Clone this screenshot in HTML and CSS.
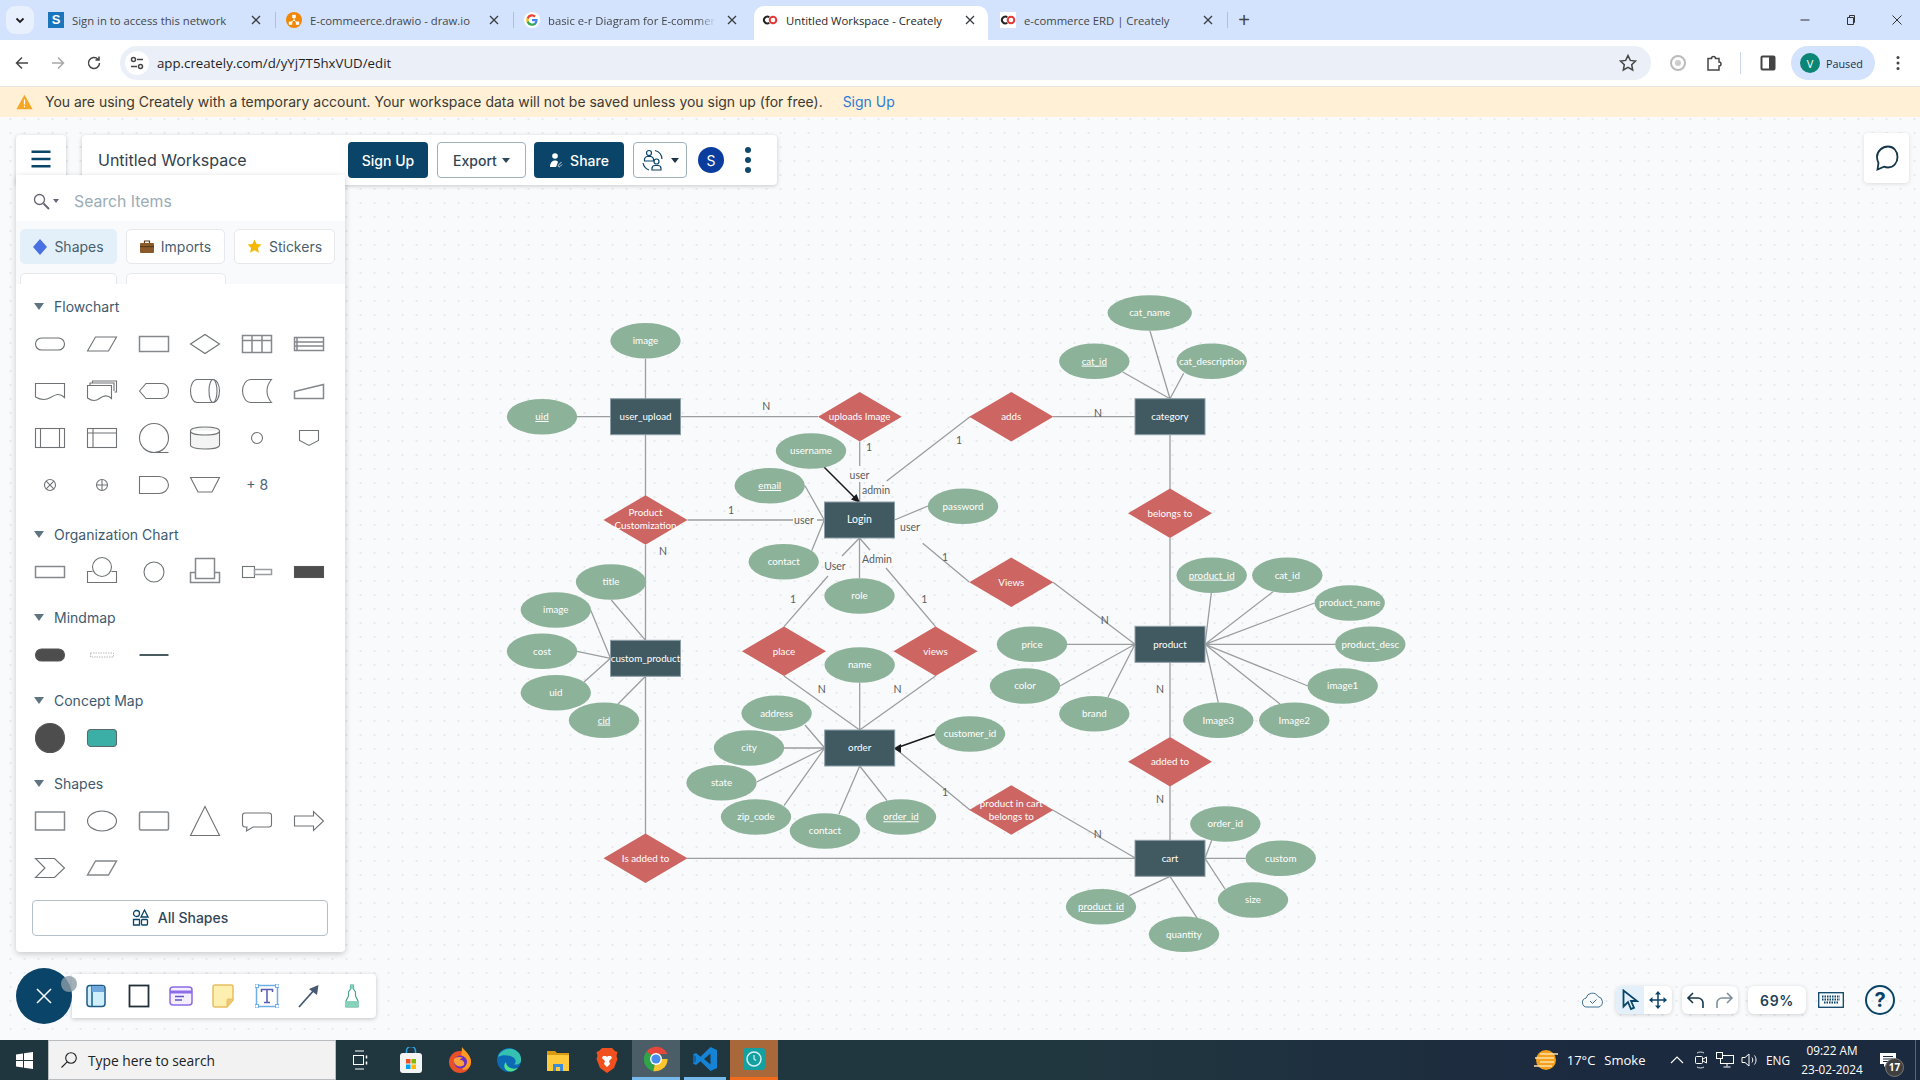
FILE: index.html
```html
<!DOCTYPE html>
<html lang="en">
<head>
<meta charset="utf-8">
<title>Untitled Workspace - Creately</title>
<link rel="stylesheet" href="styles.css">
</head>
<body>
<div class="app">

<header class="tabstrip">
  <button class="tabmenu"><svg width="12" height="12" viewBox="0 0 12 12"><path class="ch" d="M2.5 4.5 6 8l3.5-3.5"/></svg></button>
  <div class="tab">
    <span class="fav fav-s">S</span><span class="tabtitle">Sign in to access this network</span><svg class="tabx" viewBox="0 0 16 16"><path d="m4 4 8 8m0-8-8 8"/></svg>
  </div><i class="sep"></i>
  <div class="tab">
    <svg class="fav" viewBox="0 0 16 16"><circle cx="8" cy="8" r="8" fill="#F08705"/><path d="M8 5v3M8 8 4.5 11M8 8l3.5 3" stroke="#fff" stroke-width="1"/><rect x="6.2" y="2.8" width="3.6" height="3.2" fill="#fff"/><rect x="2.8" y="9.6" width="3.4" height="3.2" fill="#fff"/><rect x="9.8" y="9.6" width="3.4" height="3.2" fill="#fff"/></svg>
    <span class="tabtitle">E-commeerce.drawio - draw.io</span><svg class="tabx" viewBox="0 0 16 16"><path d="m4 4 8 8m0-8-8 8"/></svg>
  </div><i class="sep"></i>
  <div class="tab">
    <svg class="fav" viewBox="0 0 16 16"><circle cx="8" cy="8" r="8" fill="#fff"/><path d="M13.6 8.1c0-.4 0-.8-.1-1.2H8v2.3h3.2a2.8 2.8 0 0 1-1.2 1.8v1.5h1.9c1.1-1 1.7-2.5 1.7-4.4Z" fill="#4285F4"/><path d="M8 13.8c1.6 0 2.9-.5 3.9-1.4L10 10.9c-.5.4-1.2.6-2 .6-1.5 0-2.8-1-3.3-2.4H2.8v1.5A5.8 5.8 0 0 0 8 13.8Z" fill="#34A853"/><path d="M4.7 9.1a3.5 3.5 0 0 1 0-2.2V5.4H2.8a5.800 5.800 0 0 0 0 5.200Z" fill="#FBBC05"/><path d="M8 4.500c.9 0 1.600.3 2.200.9l1.700-1.700A5.800 5.800 0 0 0 2.800 5.400l1.900 1.500C5.200 5.500 6.500 4.500 8 4.500Z" fill="#EA4335"/></svg>
    <span class="tabtitle fade">basic e-r Diagram for E-commerce</span><svg class="tabx" viewBox="0 0 16 16"><path d="m4 4 8 8m0-8-8 8"/></svg>
  </div><i class="sep off"></i>
  <div class="tab active">
    <svg class="fav" viewBox="0 0 16 16"><path d="M7.300 5.200a3.400 3.400 0 1 0 0 5.600" fill="none" stroke="#222" stroke-width="2"/><circle cx="11" cy="8" r="3.300" fill="none" stroke="#E53935" stroke-width="2"/></svg>
    <span class="tabtitle">Untitled Workspace - Creately</span><svg class="tabx" viewBox="0 0 16 16"><path d="m4 4 8 8m0-8-8 8"/></svg>
  </div><i class="sep off"></i>
  <div class="tab">
    <svg class="fav" viewBox="0 0 16 16"><rect width="16" height="16" fill="#fff"/><path d="M7.300 5.200a3.400 3.400 0 1 0 0 5.600" fill="none" stroke="#222" stroke-width="2"/><circle cx="11" cy="8" r="3.300" fill="none" stroke="#E53935" stroke-width="2"/></svg>
    <span class="tabtitle">e-commerce ERD | Creately</span><svg class="tabx" viewBox="0 0 16 16"><path d="m4 4 8 8m0-8-8 8"/></svg>
  </div><i class="sep"></i>
  <button class="newtab">+</button>
  <div class="winctl">
    <span class="wbtn"><svg width="12" height="12" viewBox="0 0 12 12"><path d="M1.500 6h9" stroke="#333" stroke-width="1"/></svg></span>
    <span class="wbtn"><svg width="12" height="12" viewBox="0 0 12 12"><path d="M2.500 3.500h6v7h-6zM4.500 3.500v-2h5v7h-1" fill="none" stroke="#333" stroke-width="1"/></svg></span>
    <span class="wbtn"><svg width="12" height="12" viewBox="0 0 12 12"><path d="m1.500 1.500 9 9m0-9-9 9" stroke="#333" stroke-width="1"/></svg></span>
  </div>
</header>

<nav class="toolbar">
  <span class="nbtn"><svg width="16" height="16" viewBox="0 0 16 16"><path class="tb" d="M14 8H2.500M8 2.500 2.500 8 8 13.500"/></svg></span>
  <span class="nbtn dim"><svg width="16" height="16" viewBox="0 0 16 16"><path class="tb" d="M2 8h11.500M8 2.500 13.500 8 8 13.500"/></svg></span>
  <span class="nbtn"><svg width="16" height="16" viewBox="0 0 16 16"><path class="tb" d="M13.500 8A5.500 5.500 0 1 1 12 4.200M13 1.500V5H9.500"/></svg></span>
  <div class="address">
    <span class="siteicon"><svg width="14" height="14" viewBox="0 0 14 14"><circle cx="3.500" cy="3.500" r="2" class="tb"/><path class="tb" d="M7 3.500h6M1 10.500h6"/><circle cx="10.500" cy="10.500" r="2" class="tb"/></svg></span>
    <span class="url">app.creately.com/d/yYj7T5hxVUD/edit</span>
    <svg class="star" width="20" height="20" viewBox="0 0 20 20"><path class="tb" d="m10 2.500 2.300 4.900 5.200.7-3.800 3.600 1 5.300-4.700-2.600L5.300 17l1-5.300L2.500 8.100l5.200-.7Z"/></svg>
  </div>
  <span class="nbtn"><svg width="18" height="18" viewBox="0 0 18 18"><circle cx="9" cy="9" r="7" fill="none" stroke="#bbb" stroke-width="2"/><circle cx="9" cy="9" r="3" fill="#ccc"/></svg></span>
  <span class="nbtn"><svg width="18" height="18" viewBox="0 0 18 18"><path class="tb" d="M3 4.500h3.500a2 2 0 0 1 4 0H14V8a2 2 0 0 1 0 4v4H3z"/></svg></span>
  <i class="tsep"></i>
  <span class="nbtn"><svg width="18" height="18" viewBox="0 0 18 18"><rect x="2.500" y="2.500" width="13" height="13" rx="1" fill="none" stroke="#444" stroke-width="2"/><rect x="10" y="3" width="5" height="12" fill="#444"/></svg></span>
  <div class="paused"><span class="vdot">V</span><span>Paused</span></div>
  <span class="nbtn"><svg width="4" height="16" viewBox="0 0 4 16"><circle cx="2" cy="2.500" r="1.500" fill="#444"/><circle cx="2" cy="8" r="1.500" fill="#444"/><circle cx="2" cy="13.500" r="1.500" fill="#444"/></svg></span>
</nav>

<div class="banner">
  <svg class="warn" width="17" height="16" viewBox="0 0 17 16"><path d="M8.500.8 16.600 15.200H.4Z" fill="#F5A623"/><path d="M8.500 5.500v5M8.500 11.800v1.500" stroke="#fff" stroke-width="1.300"/></svg>
  <span class="bantext">You are using Creately with a temporary account. Your workspace data will not be saved unless you sign up (for free).</span>
  <a class="banlink">Sign Up</a>
</div>

<main class="canvas">
  <svg class="diagram" width="1920" height="923" viewBox="0 117 1920 923">
    <path class="ln" d="M577 416.700H611M645.500 358.700V399M680.500 416.700H818M645.500 434.700V496M859.700 441.400V466M859.700 482V502M886.700 481 970 416.700M805 485.700 824.300 520M811.700 550.700 824.300 520M928 506 894.500 520M687.500 520H793M817 520H824M922.700 543.300 969.300 582M859.500 538 842 556M828 576 784 626.600M859.500 538 870 550M886 568 935.500 626.600M859.500 538V578M784 676 859.700 730M935.500 676 859.700 730M859.700 683V730M805 725 824.700 748M784 748H824.700M756.700 782 824.700 748M784 805.700 824.700 748M839 814 859.700 766M887 800.700 859.700 766M970 810 894.700 748M1052.700 810 1135.700 858.300M687 858.300H1135.700M645.500 676.300V834M645.500 545V640.300M611.300 600 645.500 640.300M590.600 610 610.500 658.300M577 651.300 610.500 658.300M584 682 610.500 658.300M618 704 645.500 676.300M1150 331 1170 398.700M1122.700 372 1170 398.700M1183.700 373.300 1170 398.700M1053 416.700H1135M1170 434.700V489M1170 538V626M1053 582.300 1135 644.300M1067 644.300H1135M1060 686 1135 644.300M1108 697 1135 644.300M1211.300 593 1205 644.300M1273 591.700 1205 644.300M1314.700 603 1205 644.300M1335 644.300H1205M1308 686 1205 644.300M1280 704 1205 644.300M1218.300 702.700 1205 644.300M1170 662.300V737M1170 786V840.300M1211.700 840.300 1205 858.300M1245.500 858.300H1205M1225 889 1205 858.300M1129.300 895.700 1170 876.300M1197.300 918.300 1170 876.300"/>
    <path class="ar" d="M824 467 855 498M935.800 734 899 747"/>
    <polygon class="arh" points="860,503 851,499.500 856.500,494"/>
    <polygon class="arh" points="893.500,748.500 901,744 901,753"/>
    <g class="ell">
      <ellipse cx="645.500" cy="340.700" rx="35.200" ry="17.800"/>
      <ellipse cx="542" cy="416.700" rx="35.200" ry="17.800"/>
      <ellipse cx="811" cy="451" rx="35.200" ry="17.800"/>
      <ellipse cx="769.700" cy="485.700" rx="35.200" ry="17.800"/>
      <ellipse cx="963" cy="506.300" rx="35.200" ry="17.800"/>
      <ellipse cx="783.700" cy="561.700" rx="35.200" ry="17.800"/>
      <ellipse cx="611" cy="582" rx="35.200" ry="17.800"/>
      <ellipse cx="859.500" cy="596" rx="35.200" ry="17.800"/>
      <ellipse cx="555.800" cy="610" rx="35.200" ry="17.800"/>
      <ellipse cx="542" cy="651.300" rx="35.200" ry="17.800"/>
      <ellipse cx="555.800" cy="692.700" rx="35.200" ry="17.800"/>
      <ellipse cx="604" cy="720.300" rx="35.200" ry="17.800"/>
      <ellipse cx="859.700" cy="665" rx="35.200" ry="17.800"/>
      <ellipse cx="776.600" cy="713.300" rx="35.200" ry="17.800"/>
      <ellipse cx="749" cy="748" rx="35.200" ry="17.800"/>
      <ellipse cx="721.500" cy="782.700" rx="35.200" ry="17.800"/>
      <ellipse cx="756" cy="817" rx="35.200" ry="17.800"/>
      <ellipse cx="824.900" cy="831" rx="35.200" ry="17.800"/>
      <ellipse cx="901" cy="817" rx="35.200" ry="17.800"/>
      <ellipse cx="970" cy="734" rx="35.200" ry="17.800"/>
      <ellipse cx="1149.700" cy="313" rx="42.200" ry="17.800"/>
      <ellipse cx="1094.300" cy="361.300" rx="35.200" ry="17.800"/>
      <ellipse cx="1211.700" cy="361.300" rx="35.200" ry="17.800"/>
      <ellipse cx="1211.700" cy="575.300" rx="35.200" ry="17.800"/>
      <ellipse cx="1287.300" cy="575.300" rx="35.200" ry="17.800"/>
      <ellipse cx="1349.700" cy="603" rx="35.200" ry="17.800"/>
      <ellipse cx="1370.300" cy="644.300" rx="35.200" ry="17.800"/>
      <ellipse cx="1342.700" cy="686" rx="35.200" ry="17.800"/>
      <ellipse cx="1294.300" cy="720.300" rx="35.200" ry="17.800"/>
      <ellipse cx="1218.300" cy="720.300" rx="35.200" ry="17.800"/>
      <ellipse cx="1032" cy="644.300" rx="35.200" ry="17.800"/>
      <ellipse cx="1025" cy="686" rx="35.200" ry="17.800"/>
      <ellipse cx="1094.300" cy="713.700" rx="35.200" ry="17.800"/>
      <ellipse cx="1225.300" cy="824" rx="35.200" ry="17.800"/>
      <ellipse cx="1280.700" cy="858.300" rx="35.200" ry="17.800"/>
      <ellipse cx="1253" cy="900" rx="35.200" ry="17.800"/>
      <ellipse cx="1184" cy="934.300" rx="35.200" ry="17.800"/>
      <ellipse cx="1101" cy="906.700" rx="35.200" ry="17.800"/>
    </g>
    <g class="ent">
      <rect x="610.500" y="398.700" width="70" height="36"/>
      <rect x="824.500" y="502" width="70" height="36"/>
      <rect x="610.500" y="640.300" width="70" height="36"/>
      <rect x="824.700" y="730" width="70" height="36"/>
      <rect x="1135" y="398.700" width="70" height="36"/>
      <rect x="1135" y="626.300" width="70" height="36"/>
      <rect x="1135" y="840.300" width="70" height="36"/>
    </g>
    <g class="rel">
      <polygon points="818,416.700 859.700,392 901.700,416.700 859.700,441.400"/>
      <polygon points="603.500,520 645.500,495.300 687.500,520 645.500,544.700"/>
      <polygon points="969.300,416.700 1011.300,392 1053.300,416.700 1011.300,441.400"/>
      <polygon points="742,651.300 784,626.600 826,651.300 784,676"/>
      <polygon points="893.500,651.300 935.500,626.600 977.500,651.300 935.500,676"/>
      <polygon points="969.300,582.300 1011.300,557.600 1053.300,582.300 1011.300,607"/>
      <polygon points="969.300,810 1011.300,785.300 1053.300,810 1011.300,834.700"/>
      <polygon points="603.500,858.300 645.500,833.600 687.500,858.300 645.500,883"/>
      <polygon points="1128,513.300 1170,488.600 1212,513.300 1170,538"/>
      <polygon points="1128,761.700 1170,737 1212,761.700 1170,786.400"/>
    </g>
    <g class="tw">
      <text x="645.500" y="340.700">image</text>
      <text x="542" y="416.700" class="u">uid</text>
      <text x="645.500" y="416.700">user_upload</text>
      <text x="859.700" y="416.700">uploads Image</text>
      <text x="811" y="451">username</text>
      <text x="769.700" y="485.700" class="u">email</text>
      <text x="859.500" y="520" class="big">Login</text>
      <text x="645.500" y="513">Product</text>
      <text x="645.500" y="525.500">Customization</text>
      <text x="963" y="506.300">password</text>
      <text x="783.700" y="561.700">contact</text>
      <text x="611" y="582">title</text>
      <text x="859.500" y="596">role</text>
      <text x="555.800" y="610">image</text>
      <text x="542" y="651.300">cost</text>
      <text x="645.500" y="658.300">custom_product</text>
      <text x="555.800" y="692.700">uid</text>
      <text x="604" y="720.300" class="u">cid</text>
      <text x="784" y="651.300">place</text>
      <text x="935.500" y="651.300">views</text>
      <text x="859.700" y="665">name</text>
      <text x="776.600" y="713.300">address</text>
      <text x="749" y="748">city</text>
      <text x="859.700" y="748">order</text>
      <text x="970" y="734">customer_id</text>
      <text x="721.500" y="782.700">state</text>
      <text x="756" y="817">zip_code</text>
      <text x="824.900" y="831">contact</text>
      <text x="901" y="817" class="u">order_id</text>
      <text x="1011.300" y="803.500">product in cart</text>
      <text x="1011.300" y="816.500">belongs to</text>
      <text x="645.500" y="858.300">Is added to</text>
      <text x="1149.700" y="313">cat_name</text>
      <text x="1094.300" y="361.300" class="u">cat_id</text>
      <text x="1211.700" y="361.300">cat_description</text>
      <text x="1011.300" y="416.700">adds</text>
      <text x="1170" y="416.700">category</text>
      <text x="1170" y="513.300">belongs to</text>
      <text x="1011.300" y="582.300">Views</text>
      <text x="1211.700" y="575.300" class="u">product_id</text>
      <text x="1287.300" y="575.300">cat_id</text>
      <text x="1349.700" y="603">product_name</text>
      <text x="1370.300" y="644.300">product_desc</text>
      <text x="1342.700" y="686">image1</text>
      <text x="1294.300" y="720.300">Image2</text>
      <text x="1218.300" y="720.300">Image3</text>
      <text x="1032" y="644.300">price</text>
      <text x="1170" y="644.300">product</text>
      <text x="1025" y="686">color</text>
      <text x="1094.300" y="713.700">brand</text>
      <text x="1170" y="761.700">added to</text>
      <text x="1170" y="858.300">cart</text>
      <text x="1225.300" y="824">order_id</text>
      <text x="1280.700" y="858.300">custom</text>
      <text x="1253" y="900">size</text>
      <text x="1184" y="934.300">quantity</text>
      <text x="1101" y="906.700" class="u">product_id</text>
    </g>
    <g class="tl">
      <text x="766.300" y="405.700">N</text>
      <text x="869" y="447.300">1</text>
      <text x="959" y="440.300">1</text>
      <text x="859.500" y="474.500">user</text>
      <text x="876" y="490">admin</text>
      <text x="731" y="509.700">1</text>
      <text x="804" y="520">user</text>
      <text x="910" y="527">user</text>
      <text x="663" y="550.700">N</text>
      <text x="945" y="557">1</text>
      <text x="835" y="565.700">User</text>
      <text x="877" y="558.700">Admin</text>
      <text x="793" y="599.300">1</text>
      <text x="924.400" y="599.300">1</text>
      <text x="821.800" y="688.700">N</text>
      <text x="897.600" y="688.700">N</text>
      <text x="945" y="792">1</text>
      <text x="1097.700" y="833.700">N</text>
      <text x="1098" y="412.700">N</text>
      <text x="1104.700" y="619.700">N</text>
      <text x="1160" y="688.700">N</text>
      <text x="1160" y="799.300">N</text>
    </g>
  </svg>

  <div class="menucard"><svg width="20" height="18" viewBox="0 0 20 18"><path d="M.5 1.700h19M.5 9h19M.5 16.300h19" stroke="#0A4469" stroke-width="2.500"/></svg></div>

  <div class="wscard">
    <span class="wstitle">Untitled Workspace</span>
    <button class="btn primary signup">Sign Up</button>
    <button class="btn outline export">Export <i class="caret"></i></button>
    <button class="btn primary share"><svg width="14" height="16" viewBox="0 0 14 16"><circle cx="6" cy="4" r="2.800" fill="#fff"/><path d="M1 15c0-4 2-6.500 5-6.500 1.500 0 2.500.5 3 1.500L7 15Z" fill="#fff"/><path d="M12.500 10 9.500 13a1 1 0 0 0 1.500 1.500l2-2" fill="none" stroke="#cfe0ea" stroke-width="1"/></svg>Share</button>
    <button class="btn outline collab"><svg width="24" height="24" viewBox="0 0 24 24"><g fill="none" stroke="#0A4469" stroke-width="1.200"><circle cx="8" cy="5" r="2.500"/><path d="M3.500 13v-1.500a3 3 0 0 1 3-3h3a3 3 0 0 1 3 3V13Z"/><circle cx="15.500" cy="13.500" r="2.500"/><path d="M11 22v-1.500a3 3 0 0 1 3-3h3a3 3 0 0 1 3 3V22Z"/><path d="M14 2.500a9.500 9.500 0 0 1 7 8.500M2 15a9.500 9.500 0 0 0 6 7"/></g></svg><i class="caret"></i></button>
    <span class="avatar">S</span>
    <span class="kebab"><i></i><i></i><i></i></span>
  </div>

  <aside class="panel">
    <div class="psearch">
      <svg width="17" height="17" viewBox="0 0 17 17"><circle cx="6.500" cy="6.500" r="5" fill="none" stroke="#667" stroke-width="1.300"/><path d="m10.500 10.500 5.500 5.500" stroke="#667" stroke-width="2"/></svg>
      <i class="mini-caret"></i>
      <span class="pplace">Search Items</span>
    </div>
    <div class="ptabs">
      <div class="ptab on w97"><svg width="14" height="16" viewBox="0 0 14 16"><path d="M7 0 14 8 7 16 0 8Z" fill="#4A6FE3"/></svg>Shapes</div>
      <div class="ptab w99"><svg width="14" height="13" viewBox="0 0 14 13"><rect y="3" width="14" height="10" rx="1" fill="#8A5A2B"/><path d="M4.500 3V1h5v2" fill="none" stroke="#5b3c1c" stroke-width="1.200"/><rect y="6" width="14" height="1.200" fill="#5b3c1c"/></svg>Imports</div>
      <div class="ptab w101"><svg width="15" height="15" viewBox="0 0 15 15"><path d="m7.500.5 2.100 4.500 4.900.6-3.600 3.300 1 4.900-4.400-2.500-4.400 2.500 1-4.900L.5 5.600 5.400 5Z" fill="#F5B800"/></svg>Stickers</div>
      <div class="ptab w97"></div>
      <div class="ptab w100"></div>
    </div>

    <div class="psec">
      <h3 class="phead"><i class="tri"></i>Flowchart</h3>
      <div class="sgrid pad4">
        <svg class="si" viewBox="0 0 32 32"><rect x="1.500" y="10" width="29" height="12" rx="6"/></svg>
        <svg class="si" viewBox="0 0 32 32"><path d="M1.500 23 9.500 9h21l-8 14Z"/></svg>
        <svg class="si b" viewBox="0 0 32 32"><rect x="1.500" y="8.500" width="29" height="15"/></svg>
        <svg class="si" viewBox="0 0 32 32"><path d="M1.500 16 16 6.500 30.500 16 16 25.500Z"/></svg>
        <svg class="si b" viewBox="0 0 32 32"><rect x="1.500" y="7.500" width="29" height="17"/><path d="M1.500 12.500h29M11 7.500v17M21 7.500v17"/></svg>
        <svg class="si b" viewBox="0 0 32 32"><rect x="1.500" y="9.500" width="29" height="13"/><path d="M1.500 14h29M1.500 18h29M4 9.500v13"/></svg>

        <svg class="si" viewBox="0 0 32 32"><path d="M1.500 8.500h29v14c-5-5-9-3-14 0s-10 2.500-15-.5Z"/></svg>
        <svg class="si" viewBox="0 0 32 32"><path d="M1.500 10.500h24v13c-4-4-8-3-12 0s-8 2.500-12-.5ZM4 10.500V8h24v3M6.500 8V6h24v11h-2M28 8v8"/></svg>
        <svg class="si" viewBox="0 0 32 32"><path d="M1.500 16 8 8.500h16a6.500 7.500 0 0 1 0 15H8Z"/></svg>
        <svg class="si" viewBox="0 0 32 32"><path d="M8 4.500h16c3.500 0 6.500 5 6.500 11.500S27.500 27.500 24 27.500H8c-3.500 0-6.500-5-6.500-11.500S4.500 4.500 8 4.500Z"/><ellipse cx="24" cy="16" rx="4" ry="11.500"/></svg>
        <svg class="si" viewBox="0 0 32 32"><path d="M10 4.500h20.500C27.500 8 26 12 26 16s1.500 8 4.500 11.500H10C5 27.500 1.500 22 1.500 16S5 4.500 10 4.500Z"/></svg>
        <svg class="si b" viewBox="0 0 32 32"><path d="M1.500 16.500 30.500 9.500v14h-29Z"/></svg>

        <svg class="si" viewBox="0 0 32 32"><rect x="1.500" y="6.500" width="29" height="19"/><path d="M6.500 6.500v19M25.500 6.500v19"/></svg>
        <svg class="si" viewBox="0 0 32 32"><rect x="1.500" y="6.500" width="29" height="19"/><path d="M1.500 11h29M7 6.500v19"/></svg>
        <svg class="si" viewBox="0 0 32 32"><circle cx="16" cy="16" r="14.500"/><path d="M16 30.500h14.500"/></svg>
        <svg class="si" viewBox="0 0 32 32"><path class="cyl" d="M1.500 9c0-2.500 6.500-4 14.500-4s14.500 1.500 14.500 4v14c0 2.500-6.500 4-14.500 4s-14.500-1.500-14.500-4Z"/><path d="M1.500 9c0 2.500 6.500 4 14.500 4s14.500-1.500 14.500-4"/></svg>
        <svg class="si" viewBox="0 0 32 32"><circle cx="16" cy="16" r="5.500"/></svg>
        <svg class="si" viewBox="0 0 32 32"><path d="M6.500 8.500h19v10L16 23.500l-9.500-5Z"/></svg>

        <svg class="si" viewBox="0 0 32 32"><circle cx="16" cy="16" r="5.500"/><path d="m12.200 12.200 7.600 7.600m0-7.600-7.600 7.600"/></svg>
        <svg class="si" viewBox="0 0 32 32"><circle cx="16" cy="16" r="5.500"/><path d="M10.500 16h11M16 10.500v11"/></svg>
        <svg class="si" viewBox="0 0 32 32"><path d="M1.500 7.500H21a9.500 8.500 0 0 1 0 17H1.500Z"/></svg>
        <svg class="si" viewBox="0 0 32 32"><path d="M1.500 8.500h29L23 23H9Z"/></svg>
        <span class="plus8">+ 8</span>
      </div>
    </div>

    <div class="psec">
      <h3 class="phead"><i class="tri"></i>Organization Chart</h3>
      <div class="sgrid">
        <svg class="si b" viewBox="0 0 32 32"><rect x="1.500" y="10.500" width="29" height="11"/></svg>
        <svg class="si" viewBox="0 0 32 32"><path d="M6.500 15.500h-5v11h29v-11h-5"/><circle cx="16" cy="11" r="9.500"/></svg>
        <svg class="si" viewBox="0 0 32 32"><circle cx="16" cy="16" r="10"/></svg>
        <svg class="si b" viewBox="0 0 32 32"><path d="M6.500 16.500h-5v10h29v-10h-5"/><rect x="6.500" y="2.500" width="19" height="20"/></svg>
        <svg class="si" viewBox="0 0 32 32"><rect x="1.500" y="10.500" width="12" height="11"/><rect class="thick" x="13.500" y="13.500" width="17" height="5"/></svg>
        <svg class="si" viewBox="0 0 32 32"><rect class="sol" x="1.500" y="10.500" width="29" height="11"/></svg>
      </div>
    </div>

    <div class="psec">
      <h3 class="phead"><i class="tri"></i>Mindmap</h3>
      <div class="sgrid">
        <svg class="si" viewBox="0 0 32 32"><rect class="sol" x="1.500" y="10" width="29" height="12" rx="6"/></svg>
        <svg class="si" viewBox="0 0 32 32"><rect class="dots" x="4.500" y="14" width="23" height="4"/></svg>
        <svg class="si" viewBox="0 0 32 32"><path class="thickline" d="M1.500 16h29"/></svg>
      </div>
    </div>

    <div class="psec">
      <h3 class="phead"><i class="tri"></i>Concept Map</h3>
      <div class="sgrid">
        <svg class="si" viewBox="0 0 32 32"><circle class="sol" cx="16" cy="16" r="14.500"/></svg>
        <svg class="si" viewBox="0 0 32 32"><rect class="teal" x="1.500" y="7.500" width="29" height="17" rx="3.500"/></svg>
      </div>
    </div>

    <div class="psec">
      <h3 class="phead"><i class="tri"></i>Shapes</h3>
      <div class="sgrid">
        <svg class="si b" viewBox="0 0 32 32"><rect x="1.500" y="7" width="29" height="18"/></svg>
        <svg class="si" viewBox="0 0 32 32"><ellipse cx="16" cy="16" rx="14.500" ry="10"/></svg>
        <svg class="si b" viewBox="0 0 32 32"><rect x="1.500" y="7" width="29" height="18" rx="1.500"/></svg>
        <svg class="si" viewBox="0 0 32 32"><path class="b2" d="M16 1.500 30.500 30.500h-29Z"/></svg>
        <svg class="si" viewBox="0 0 32 32"><path d="M4 8h24a2.500 2.500 0 0 1 2.500 2.500v9A2.500 2.500 0 0 1 28 22H12l-6.500 4 .5-4H4a2.500 2.500 0 0 1-2.500-2.500v-9A2.500 2.500 0 0 1 4 8Z"/></svg>
        <svg class="si" viewBox="0 0 32 32"><path d="M1.500 11h19V6.500L30.500 16l-10 9.500V21h-19Z"/></svg>

        <svg class="si" viewBox="0 0 32 32"><path d="M1.500 6.500h19L30.500 16l-10 9.500h-19L11 16Z"/></svg>
        <svg class="si b" viewBox="0 0 32 32"><path d="M1.500 23 9.500 9h21l-8 14Z"/></svg>
      </div>
    </div>

    <button class="allshapes"><svg width="17" height="17" viewBox="0 0 17 17"><g fill="none" stroke="#0A4469" stroke-width="1.300"><circle cx="4.500" cy="4.500" r="3"/><path d="M12.500 1 16 8H9ZM1.500 10.500h6v5.500h-6z"/><rect x="9.500" y="10.500" width="6" height="5.500" rx="1"/></g></svg>All Shapes</button>
  </aside>

  <div class="chatcard"><svg width="24" height="26" viewBox="0 0 24 26"><path d="M13 1.500c5.500 0 9.500 4.500 9.500 10.500S18.500 22.500 13 22.500c-1.500 0-2.800-.3-4-.8L2.500 24.500l1-6.500C2.500 16 2 14 2 12 2 6 7.500 1.500 13 1.500Z" fill="none" stroke="#14374B" stroke-width="1.800"/></svg></div>

  <div class="tools">
    <svg class="ti" viewBox="0 0 24 24"><rect x="3" y="1.500" width="18" height="21" rx="3" fill="#CFEFFA" stroke="#1F5C88" stroke-width="1.500"/><path d="M8 1.500v21" stroke="#1F5C88" stroke-width="1.500"/><rect x="8" y="2" width="12" height="6" fill="#6FA8DC"/></svg>
    <svg class="ti" viewBox="0 0 24 24"><rect x="2.500" y="1.500" width="19" height="21" fill="#fff" stroke="#22303a" stroke-width="1.800"/></svg>
    <svg class="ti" viewBox="0 0 24 24"><rect x="1" y="3" width="22" height="18" rx="3" fill="#F4EEFF" stroke="#8C6CE8" stroke-width="1.500"/><path d="M1 8h22" stroke="#8C6CE8" stroke-width="3"/><path d="M6 12.500h9M6 16h7" stroke="#5F56C9" stroke-width="1.500"/></svg>
    <svg class="ti" viewBox="0 0 24 24"><path d="M3 1h16a2 2 0 0 1 2 2v13l-6 7H3a2 2 0 0 1-2-2V3a2 2 0 0 1 2-2Z" fill="#FCEFB0" stroke="#E9BE5F" stroke-width="1.500"/><path d="M21 15h-5a1 1 0 0 0-1 1v6" fill="#E9C878" stroke="#E9BE5F"/></svg>
    <svg class="ti" viewBox="0 0 24 24"><rect x="1.500" y="1.500" width="21" height="21" fill="none" stroke="#6FAEE8" stroke-width="1.500"/><g fill="#fff" stroke="#6FAEE8"><rect x="0" y="0" width="3.500" height="3.500"/><rect x="20.500" y="0" width="3.500" height="3.500"/><rect x="0" y="20.500" width="3.500" height="3.500"/><rect x="20.500" y="20.500" width="3.500" height="3.500"/></g><path d="M6.500 8V5.500h11V8M12 5.500v13M9 18.500h6" fill="none" stroke="#5A5AB0" stroke-width="1.500"/></svg>
    <svg class="ti" viewBox="0 0 24 24"><path d="M2 23 18 5" stroke="#475A73" stroke-width="1.800"/><path d="M21.500 1 20 11l-8-6Z" fill="#475A73"/></svg>
    <svg class="ti" viewBox="0 0 24 24"><path d="M10.500 1h3v4l2 3v4l2.500 5v6H6v-6l2.500-5V8l2-3Z" fill="#fff" stroke="#4FA28E" stroke-width="1.200"/><path d="M10.500 1h3v4h-3zM6 17h12v6H6z" fill="#86D3BC"/></svg>
  </div>
  <span class="fabdot"></span>
  <button class="fab"><svg width="18" height="18" viewBox="0 0 18 18"><path d="m2 2 14 14m0-14L2 16" stroke="#fff" stroke-width="1.500"/></svg></button>

  <div class="rtools">
    <svg class="cloud" width="24" height="16" viewBox="0 0 24 16"><path d="M6 15a4.500 4.500 0 0 1-1-8.900A6.500 6.500 0 0 1 17 4.500a5.500 5.500 0 0 1 1 10.500Z" fill="none" stroke="#3E6F92" stroke-width="1"/><path d="m9 9 2.500 2.500L15.500 7.500" fill="none" stroke="#3E6F92"/></svg>
    <div class="rgroup g1">
      <span class="rb on"><svg width="18" height="22" viewBox="0 0 18 22"><path d="M2.500 1.500v16l4.500-4.500 3 7 3-1.300-3-6.700h6Z" fill="none" stroke="#0A4469" stroke-width="1.800"/></svg></span>
      <span class="rb"><svg width="20" height="20" viewBox="0 0 20 20"><path d="M10 2v16M2 10h16" stroke="#0A4469" stroke-width="1.500"/><path d="m10 1 3 3.500H7ZM10 19l-3-3.500h6ZM1 10l3.500-3v6ZM19 10l-3.500 3V7Z" fill="#0A4469"/></svg></span>
    </div>
    <div class="rgroup g2">
      <span class="rb"><svg width="20" height="20" viewBox="0 0 20 20"><path d="M7 3 2 8l5 5M2 8h10a5 5 0 0 1 5 5v5" fill="none" stroke="#14374B" stroke-width="1.600"/></svg></span>
      <span class="rb"><svg width="20" height="20" viewBox="0 0 20 20"><path d="M13 3l5 5-5 5M18 8H8a5 5 0 0 0-5 5v5" fill="none" stroke="#7F8F99" stroke-width="1.600"/></svg></span>
    </div>
    <div class="rgroup zoomv">69%</div>
    <svg class="kbd" width="26" height="16" viewBox="0 0 26 16"><rect x=".7" y=".7" width="24.600" height="14.600" fill="none" stroke="#0A4469" stroke-width="1.300"/><path d="M4 4.500h18M4 7.500h18M6 10.500h14" stroke="#0A4469" stroke-width="1.800" stroke-dasharray="1.500 1"/></svg>
    <span class="help">?</span>
  </div>
</main>

<footer class="taskbar">
  <span class="tstart"><svg width="17" height="17" viewBox="0 0 17 17"><path d="M0 2.400 7 1.400v6.600H0zM8 1.300 17 0v8H8zM0 9h7v6.600L0 14.600zM8 9h9v8l-9-1.300z" fill="#fff"/></svg></span>
  <div class="tsearch"><svg width="18" height="18" viewBox="0 0 18 18"><circle cx="11" cy="7" r="5.300" fill="none" stroke="#222" stroke-width="1.100"/><path d="M7.200 10.800 1.500 16.500" stroke="#222" stroke-width="1.100"/></svg><span>Type here to search</span></div>
  <span class="tview"><svg width="16" height="20" viewBox="0 0 16 20"><path d="M3 1h9M3 19h9" stroke="#fff"/><rect x="1.500" y="5.500" width="10" height="9" fill="none" stroke="#fff"/><path d="M14.500 5.500v3M14.500 11.500v3" stroke="#fff" stroke-width="1.500"/></svg></span>
  <div class="apps">
    <span class="app-ic"><svg width="24" height="26" viewBox="0 0 24 26"><path d="M7.500 7V4a4.500 4.500 0 0 1 9 0v3" fill="none" stroke="#2EA3E8" stroke-width="1.600"/><rect x="1" y="6" width="22" height="20" rx="3" fill="#F4F4F4"/><rect x="7" y="12" width="4.500" height="4.500" fill="#F25022"/><rect x="12.500" y="12" width="4.500" height="4.500" fill="#7FBA00"/><rect x="7" y="17.500" width="4.500" height="4.500" fill="#00A4EF"/><rect x="12.500" y="17.500" width="4.500" height="4.500" fill="#FFB900"/></svg></span>
    <span class="app-ic"><svg width="24" height="26" viewBox="0 0 24 26"><circle cx="12" cy="15" r="11" fill="#E8502A"/><path d="M14 0c2 3 9 8 9 15a8 8 0 0 1-8 8l-2-9Z" fill="#FF9B1F"/><circle cx="12.500" cy="15" r="6.500" fill="#6A2FC4"/><path d="M6 12c2-2 6-3 9-1-2 0-3 1-3 2 3 0 5 2 4 5-2 2-7 2-9-1-1-1.500-1.500-3-1-5Z" fill="#F8A13B"/></svg></span>
    <span class="app-ic"><svg width="24" height="24" viewBox="0 0 24 24"><circle cx="12" cy="12" r="12" fill="#0C6AB5"/><path d="M1 9C3 2 12-1 18 2c5 2.500 6.500 7 6 11-.5 3-4 4-7 3.500 2.500-2 2-5-.5-7C13 7 5 6 1 9Z" fill="#35C1B0"/><path d="M9 14c0 5 6 8 12 6-3 3-7 4-10 3-4-1.500-5-6-2-9Z" fill="#54E08A"/></svg></span>
    <span class="app-ic"><svg width="22" height="24" viewBox="0 0 22 24"><path d="M0 3h8l2 2h12v3H0Z" fill="#D99A12"/><path d="M0 7h22v16H0Z" fill="#FFCB3D"/><path d="M6 23v-7h10v7h-3v-4H9v4Z" fill="#3C8DD9"/></svg></span>
    <span class="app-ic"><svg width="22" height="26" viewBox="0 0 22 26"><path d="M6 1h10l3 3 2.500 1-1 4 1 3-3.500 9L11 26l-7-5-3.500-9 1-3-1-4L3 4Z" fill="#F1501F"/><path d="M7 9h3l1 1 1-1h3l1 2-3 3 1 3-3 3-3-3 1-3-3-3Z" fill="#fff"/></svg></span>
    <span class="app-ic sel"><svg width="26" height="26" viewBox="0 0 26 26"><path d="M13 13 3.500 5.400A12.500 12.500 0 0 1 24.600 8H13Z" fill="#E9463B"/><path d="M13 13 10.300 25.200A12.500 12.500 0 0 1 3.500 5.400Z" fill="#2FA54A"/><path d="M13 13H24.600A12.500 12.500 0 0 1 10.300 25.200Z" fill="#FCC42D"/><circle cx="13" cy="13" r="6" fill="#fff"/><circle cx="13" cy="13" r="4.600" fill="#4A8CEB"/></svg></span>
    <span class="app-ic sel2"><svg width="24" height="24" viewBox="0 0 24 24"><path d="M17.500 0 24 3v18l-6.500 3-10-9.800L3 18l-3-1.500V7.500L3 6l4.500 3.800ZM17.500 6.500 11 12l6.500 5.500Z" fill="#1583D6"/><path d="M0 16.500V7.500L3 9.500v5z" fill="#0E65AB"/></svg></span>
    <span class="app-ic sel3"><svg width="24" height="24" viewBox="0 0 24 24"><rect x="1" y="1" width="22" height="22" rx="3" fill="#14A0A0"/><circle cx="12" cy="12" r="7" fill="none" stroke="#D6F2F0" stroke-width="1.500"/><path d="M12 8v4l2 1.500" fill="none" stroke="#D6F2F0" stroke-width="1.200"/></svg></span>
  </div>
  <div class="tray">
    <svg class="sun" width="24" height="22" viewBox="0 0 24 22"><circle cx="12" cy="11" r="10" fill="#F3A01F"/><path d="M6 5h18M1 9h19M6 13h14M0 17h18" stroke="#FFE0A8" stroke-width="1.500"/></svg>
    <span class="temp">17°C</span><span class="smoke">Smoke</span>
    <svg class="tr chev" width="14" height="8" viewBox="0 0 14 8"><path d="m1 7 6-6 6 6" fill="none" stroke="#fff" stroke-width="1.100"/></svg>
    <svg class="tr meet" width="14" height="18" viewBox="0 0 14 18"><path d="M3 2c2-1.300 5-1.300 7 0M3 16c2 1.300 5 1.300 7 0" fill="none" stroke="#ddd"/><rect x="1.500" y="5.500" width="7" height="7" rx="1" fill="none" stroke="#fff"/><path d="m9 8 3.500-2v6L9 10" fill="none" stroke="#fff"/></svg>
    <svg class="tr netw" width="18" height="16" viewBox="0 0 18 16"><rect x="4.500" y="3.500" width="13" height="8" fill="none" stroke="#fff"/><rect x=".5" y=".5" width="6" height="6" fill="#1E2B3F" stroke="#fff"/><path d="M11 11.500v3M7.500 15h7" stroke="#fff"/></svg>
    <svg class="tr" width="18" height="16" viewBox="0 0 18 16"><path d="M1 5.500h3L8 2v12L4 10.500H1Z" fill="none" stroke="#fff"/><path d="M11 5.500c1 1.500 1 3.500 0 5M13.500 3.500c2 2.500 2 6.500 0 9" fill="none" stroke="#fff"/></svg>
    <span class="eng">ENG</span>
    <span class="clock"><span>09:22 AM</span><span>23-02-2024</span></span>
    <span class="notif"><svg width="16" height="15" viewBox="0 0 16 15"><path d="M0 0h16v11H7l-3 3v-3H0Z" fill="#fff"/><path d="M3 3.500h10M3 6h10M3 8.500h7" stroke="#1E2B3F"/></svg><b class="nbadge">17</b></span>
    <i class="showdesk"></i>
  </div>
</footer>

</div>
</body>
</html>
```
FILE: styles.css
```css
* { box-sizing: border-box; }
html, body { margin: 0; padding: 0; }
body { width: 1920px; height: 1080px; overflow: hidden; font-family: Inter, "Noto Sans", sans-serif; }
button { font: inherit; border: 0; background: none; padding: 0; }
.app { width: 1920px; height: 1080px; display: flex; flex-direction: column; }

/* tab strip */
.tabstrip { height: 40px; flex: none; background: #D3E3FD; display: flex; align-items: flex-start; padding: 6px 0 0 6px; }
.tabmenu { width: 28px; height: 28px; border-radius: 9px; background: #E8F0FE; display: flex; align-items: center; justify-content: center; margin-right: 6px; }
.ch { fill: none; stroke: #1f1f1f; stroke-width: 1.800; }
.tab { width: 234px; height: 34px; flex: none; display: flex; align-items: center; padding: 0 10px 6px 8px; font-family: "Open Sans", sans-serif; font-size: 11.300px; color: #45474a; }
.tab.active { background: #fff; border-radius: 10px 10px 0 0; color: #1f1f1f; }
.fav { width: 16px; height: 16px; flex: none; margin-right: 8px; }
.fav-s { background: #1B75BC; color: #fff; font: bold 13px/16px "Liberation Sans", sans-serif; text-align: center; }
.tabtitle { flex: 1; white-space: nowrap; overflow: hidden; }
.tabtitle.fade { -webkit-mask-image: linear-gradient(90deg, #000 150px, transparent 168px); mask-image: linear-gradient(90deg, #000 150px, transparent 168px); }
.tabx { width: 16px; height: 16px; flex: none; fill: none; stroke: #3a3c3f; stroke-width: 1.300; }
.sep { width: 1px; height: 16px; margin: 6px 2px 0 1px; background: #A6C2EC; flex: none; }
.sep.off { background: none; }
.newtab { width: 28px; height: 28px; font-size: 20px; line-height: 26px; color: #444; font-family: "Liberation Sans", sans-serif; }
.winctl { margin-left: auto; display: flex; margin-top: -6px; }
.wbtn { width: 46px; height: 40px; display: flex; align-items: center; justify-content: center; }

/* toolbar */
.toolbar { height: 47px; flex: none; background: #fff; border-bottom: 1px solid #E3E3E3; border-radius: 8px 8px 0 0; display: flex; align-items: center; padding: 0 4px; }
.nbtn { width: 36px; height: 34px; flex: none; display: flex; align-items: center; justify-content: center; }
.tb { fill: none; stroke: #444746; stroke-width: 1.500; }
.nbtn.dim .tb { stroke: #A5A8AA; }
.address { flex: 1; height: 34px; border-radius: 17px; background: #EBEFF7; display: flex; align-items: center; padding: 0 13px 0 5px; margin: 0 9px 0 8px; }
.siteicon { width: 24px; height: 24px; border-radius: 50%; background: #fff; display: flex; align-items: center; justify-content: center; flex: none; }
.url { margin-left: 8px; font-family: "Open Sans", sans-serif; font-size: 13.250px; color: #1f1f1f; }
.star { margin-left: auto; }
.tsep { width: 1px; height: 22px; background: #C7D6EC; margin: 0 9px 0 8px; flex: none; }
.paused { width: 84px; height: 34px; border-radius: 17px; background: #D3E3FD; display: flex; align-items: center; gap: 6px; padding-left: 9px; margin: 0 5px; font-family: "Open Sans", sans-serif; font-size: 10.800px; color: #1f2f4a; flex: none; }
.vdot { width: 20px; height: 20px; border-radius: 50%; background: #0B8574; color: #fff; display: flex; align-items: center; justify-content: center; font-size: 11px; flex: none; }

/* banner */
.banner { height: 30px; flex: none; background: #FFF0D6; display: flex; align-items: center; padding: 0 0 1px 16px; font-size: 13.970px; color: #3c3a33; font-family: Inter, sans-serif; }
.warn { flex: none; margin-right: 12px; }
.bantext { white-space: nowrap; }
.banlink { margin-left: 20px; color: #2E7BD6; }

/* canvas */
.canvas { flex: 1; position: relative; overflow: hidden; background-color: #F9FAFC; background-image: radial-gradient(circle, #E7E9ED 0.8px, transparent 1.100px); background-size: 14px 14px; background-position: 3.500px -5px; }
.diagram { position: absolute; left: 0; top: 0; }
.ln { fill: none; stroke: #9B9EA0; stroke-width: 1.300; }
.ar { fill: none; stroke: #1a1a1a; stroke-width: 1.500; }
.arh { fill: #1a1a1a; }
.ell ellipse { fill: #8DB29A; }
.ent rect { fill: #415A62; stroke: #8D9EA6; stroke-width: 1; }
.rel polygon { fill: #CD6563; }
.tw text { font: 9.800px Lato, sans-serif; fill: #fff; text-anchor: middle; dominant-baseline: central; transform: translateY(-.7px); }
.tw .big { font-size: 10.500px; }
.tw .u { text-decoration: underline; }
.tl text { font: 10.500px Lato, sans-serif; fill: #5a5d60; text-anchor: middle; dominant-baseline: central; }

.menucard { position: absolute; left: 16px; top: 18px; width: 50px; height: 50px; background: #fff; border-radius: 4px; box-shadow: 0 1px 4px rgba(0,0,0,.2); display: flex; justify-content: center; padding-top: 15px; }
.wscard { position: absolute; left: 82px; top: 18px; width: 695px; height: 50px; background: #fff; border-radius: 4px; box-shadow: 0 1px 4px rgba(0,0,0,.2); display: flex; align-items: center; padding: 0 19px 0 16px; }
.wstitle { font-size: 16px; color: #33414a; width: 250px; flex: none; white-space: nowrap; }
.btn { height: 36px; border-radius: 4px; font-size: 14px; font-weight: 500; display: flex; align-items: center; justify-content: center; flex: none; }
.primary { background: #0A4469; color: #fff; }
.outline { background: #fff; color: #2e4656; border: 1px solid #9EB0BC; }
.signup { width: 80px; }
.export { width: 89px; margin-left: 9px; gap: 5px; }
.share { width: 90px; margin-left: 8px; gap: 7px; }
.collab { width: 54px; margin-left: 9px; gap: 6px; }
.caret { width: 0; height: 0; border-left: 4px solid transparent; border-right: 4px solid transparent; border-top: 5px solid currentColor; }
.collab .caret { color: #1c3445; }
.avatar { width: 26px; height: 26px; border-radius: 50%; background: #0A3D9E; color: #fff; font-size: 14px; display: flex; align-items: center; justify-content: center; margin-left: 11px; flex: none; }
.kebab { width: 8px; margin-left: 20px; display: flex; flex-direction: column; gap: 4px; align-items: center; flex: none; }
.kebab i { width: 6px; height: 6px; border-radius: 50%; background: #0F4A6E; }

/* panel */
.panel { position: absolute; left: 16px; top: 58px; width: 329px; height: 777px; background: #fff; border-radius: 0 0 4px 4px; box-shadow: 0 2px 6px rgba(0,0,0,.2); font-family: Inter, sans-serif; }
.psearch { height: 46px; display: flex; align-items: center; padding: 6px 0 0 17px; }
.mini-caret { width: 0; height: 0; margin-left: 3px; border-left: 3px solid transparent; border-right: 3px solid transparent; border-top: 4px solid #667; }
.pplace { margin-left: 15px; font-size: 15.800px; color: #9BACB6; }
.ptabs { height: 63px; overflow: hidden; background: #F9FAFC; padding: 8px 4px 0; display: flex; flex-wrap: wrap; gap: 9px; align-content: flex-start; }
.ptab { height: 35px; border-radius: 5px; background: #fff; border: 1px solid #E6E8EB; display: flex; align-items: center; justify-content: center; gap: 7px; font-size: 14px; color: #4a5f6e; flex: none; }
.ptab.on { background: #E3F0FA; border-color: #E3F0FA; }
.w97 { width: 97px; }
.w99 { width: 99px; }
.w100 { width: 100px; }
.w101 { width: 101px; }
.psec { margin-top: 12.500px; }
.phead { margin: 0 0 0 18px; height: 20px; display: flex; align-items: center; font-size: 14px; font-weight: 400; color: #3E5A70; }
.tri { width: 0; height: 0; margin-right: 10px; border-left: 5.500px solid transparent; border-right: 5.500px solid transparent; border-top: 7px solid #5F7480; }
.sgrid { display: grid; grid-template-columns: repeat(6, 51.800px); grid-auto-rows: 47px; padding: 3.500px 0 0 8.200px; justify-items: center; align-items: center; }
.pad4 { padding-bottom: 4px; }
.si { width: 32px; height: 32px; display: block; }
.si > * { fill: #fff; stroke: #6f7376; stroke-width: 1.100; }
.si.b > * { stroke: #85898c; stroke-width: 1.500; }
.si .thick { stroke: #9a9d9f; stroke-width: 1.500; }
.si .sol { fill: #4d4d4d; stroke: #555; }
.si .cyl { fill: #F4F4F4; }
.si .dots { fill: none; stroke: #aaa; stroke-width: .8; stroke-dasharray: 1.500 1; }
.si .thickline { stroke: #4B5C60; stroke-width: 2; }
.si .teal { fill: #3BAFA5; stroke: #5a6a6a; }
.si .b2 { stroke: #6f7376; }
.plus8 { font-size: 14px; color: #4A6478; }
.allshapes { display: flex; align-items: center; justify-content: center; gap: 9px; width: 296px; height: 36px; margin: 8.500px 0 0 16px; border: 1px solid #B4C0C8; border-radius: 4px; background: #fff; font-size: 14px; font-weight: 500; color: #33475a; }

.chatcard { position: absolute; left: 1864px; top: 16px; width: 45px; height: 50px; background: #fff; border-radius: 4px; box-shadow: 0 1px 4px rgba(0,0,0,.12); display: flex; align-items: center; justify-content: center; }

/* bottom left */
.tools { position: absolute; left: 72px; top: 857px; width: 304px; height: 44px; background: #fff; border-radius: 0 4px 4px 0; box-shadow: 0 1px 4px rgba(0,0,0,.22); display: flex; align-items: center; padding-left: 12px; gap: 18.700px; }
.ti { width: 24px; height: 24px; flex: none; }
.fab { position: absolute; left: 16px; top: 851px; width: 56px; height: 56px; border-radius: 50%; background: #0A4469; display: flex; align-items: center; justify-content: center; }
.fabdot { position: absolute; left: 61px; top: 859px; width: 16px; height: 16px; border-radius: 50%; background: #8B9CA6; opacity: .8; z-index: 2; }

/* bottom right */
.rtools { position: absolute; right: 25px; top: 868px; height: 30px; display: flex; align-items: center; }
.cloud { margin-right: 11px; }
.rgroup { height: 28px; background: #fff; border-radius: 6px; box-shadow: 0 1px 4px rgba(0,0,0,.16); display: flex; align-items: center; }
.g2 { margin-left: 10px; }
.rb { width: 28px; height: 28px; display: flex; align-items: center; justify-content: center; border-radius: 6px 0 0 6px; }
.rb.on { background: #E3F0FA; }
.zoomv { width: 58px; margin-left: 10px; justify-content: center; font-size: 14px; font-weight: 600; color: #1F3F55; letter-spacing: .6px; }
.kbd { margin-left: 12px; }
.help { width: 30px; height: 30px; margin-left: 21px; border: 2.500px solid #0A4469; border-radius: 50%; color: #0A4469; font-size: 20px; font-weight: 700; display: flex; align-items: center; justify-content: center; }

/* taskbar */
.taskbar { height: 40px; flex: none; background: linear-gradient(90deg, #20363F 0, #21373F 55%, #1C2A3F 82%); display: flex; align-items: stretch; font-family: "Open Sans", sans-serif; color: #fff; }
.tstart { width: 48px; display: flex; align-items: center; justify-content: center; flex: none; }
.tsearch { width: 288px; background: #F2F2F2; border: 1px solid #B9BDBF; display: flex; align-items: center; padding-left: 11px; gap: 10px; color: #222; font-size: 13.800px; flex: none; }
.tview { width: 48px; display: flex; align-items: center; justify-content: center; flex: none; }
.apps { display: flex; gap: 1px; margin-left: 3px; }
.app-ic { width: 48px; display: flex; align-items: center; justify-content: center; }
.sel { background: #4B5E68; border-bottom: 3px solid #76B9ED; }
.sel2 { border-bottom: 3px solid #76B9ED; width: 42px; margin: 0 3px; }
.sel3 { background: #A8683A; border-bottom: 3px solid #F26B1D; }
.tray { margin-left: auto; display: flex; align-items: center; font-size: 13px; }
.sun { margin-right: 9px; }
.temp { margin-right: 9px; }
.smoke { margin-right: 25px; }
.tr { margin-right: 9px; }
.chev { margin-right: 10px; }
.meet { margin-right: 8px; }
.netw { margin-right: 6.500px; }
.eng { font-size: 11.800px; margin: 0 6px 0 -2px; }
.clock { width: 72px; display: flex; flex-direction: column; align-items: center; font-size: 11.800px; line-height: 19px; }
.notif { width: 47px; position: relative; display: flex; justify-content: center; padding-right: 8px; }
.nbadge { position: absolute; left: 17px; top: 5px; width: 19px; height: 19px; border-radius: 50%; background: #3f3f3f; border: 1px solid #777; font-size: 10px; font-weight: 700; line-height: 17px; text-align: center; }
.showdesk { width: 1px; height: 40px; background: #5b6675; margin-right: 4px; }
```
